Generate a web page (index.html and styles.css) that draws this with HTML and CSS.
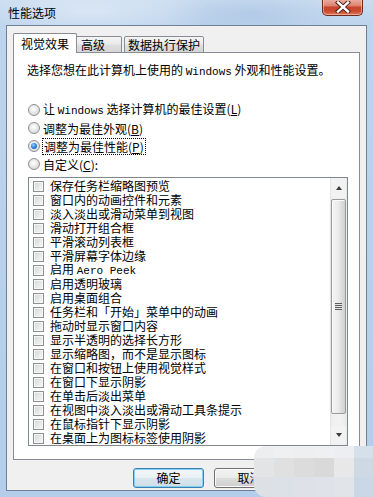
FILE: index.html
```html
<!DOCTYPE html>
<html lang="zh-CN">
<head>
<meta charset="utf-8">
<title>性能选项</title>
<link rel="stylesheet" href="styles.css">
</head>
<body>
<div class="window">
  <div class="titlebar">
    <span class="title">性能选项</span>
    <div class="close">
      <svg width="16" height="12" viewBox="0 0 16 12">
        <path d="M3 1.5 L13 10.5 M13 1.5 L3 10.5" stroke="#4a1b12" stroke-width="4.2" stroke-linecap="square"/>
        <path d="M3 1.5 L13 10.5 M13 1.5 L3 10.5" stroke="#ffffff" stroke-width="2.4" stroke-linecap="square"/>
      </svg>
    </div>
  </div>
  <div class="client">
    <div class="tabs">
      <div class="tab active">视觉效果</div>
      <div class="tab tab-adv">高级</div>
      <div class="tab tab-dep">数据执行保护</div>
    </div>
    <div class="panel">
      <p class="desc">选择您想在此计算机上使用的 <span class="mono">Windows</span> 外观和性能设置。</p>
      <div class="radios">
        <div class="radio"><span class="rb"></span><span class="label">让 <span class="mono">Windows</span> 选择计算机的最佳设置(<u>L</u>)</span></div>
        <div class="radio"><span class="rb"></span><span class="label">调整为最佳外观(<u>B</u>)</span></div>
        <div class="radio"><span class="rb checked"></span><span class="label focus">调整为最佳性能(<u>P</u>)</span></div>
        <div class="radio"><span class="rb"></span><span class="label">自定义(<u>C</u>):</span></div>
      </div>
      <div class="list">
        <div class="items">
          <div class="item"><span class="cb"></span><span class="label">保存任务栏缩略图预览</span></div>
          <div class="item"><span class="cb"></span><span class="label">窗口内的动画控件和元素</span></div>
          <div class="item"><span class="cb"></span><span class="label">淡入淡出或滑动菜单到视图</span></div>
          <div class="item"><span class="cb"></span><span class="label">滑动打开组合框</span></div>
          <div class="item"><span class="cb"></span><span class="label">平滑滚动列表框</span></div>
          <div class="item"><span class="cb"></span><span class="label">平滑屏幕字体边缘</span></div>
          <div class="item"><span class="cb"></span><span class="label">启用 <span class="mono">Aero Peek</span></span></div>
          <div class="item"><span class="cb"></span><span class="label">启用透明玻璃</span></div>
          <div class="item"><span class="cb"></span><span class="label">启用桌面组合</span></div>
          <div class="item"><span class="cb"></span><span class="label">任务栏和「开始」菜单中的动画</span></div>
          <div class="item"><span class="cb"></span><span class="label">拖动时显示窗口内容</span></div>
          <div class="item"><span class="cb"></span><span class="label">显示半透明的选择长方形</span></div>
          <div class="item"><span class="cb"></span><span class="label">显示缩略图，而不是显示图标</span></div>
          <div class="item"><span class="cb"></span><span class="label">在窗口和按钮上使用视觉样式</span></div>
          <div class="item"><span class="cb"></span><span class="label">在窗口下显示阴影</span></div>
          <div class="item"><span class="cb"></span><span class="label">在单击后淡出菜单</span></div>
          <div class="item"><span class="cb"></span><span class="label">在视图中淡入淡出或滑动工具条提示</span></div>
          <div class="item"><span class="cb"></span><span class="label">在鼠标指针下显示阴影</span></div>
          <div class="item"><span class="cb"></span><span class="label">在桌面上为图标标签使用阴影</span></div>
        </div>
        <div class="scroll">
          <div class="sb-btn up"><span class="arrow-up"></span></div>
          <div class="thumb"><span class="grip"></span></div>
          <div class="track"></div>
          <div class="sb-btn down"><span class="arrow-down"></span></div>
        </div>
      </div>
    </div>
    <div class="buttons">
      <button class="btn default">确定</button>
      <button class="btn">取消</button>
    </div>
  </div>
  <div class="mosaic">
    <span class="m1"></span><span class="m2"></span><span class="m3"></span><span class="m4"></span><span class="m5"></span><span class="m6"></span>
    <span class="m7"></span><span class="m8"></span><span class="m9"></span><span class="m10"></span><span class="m11"></span><span class="m12"></span>
    <span class="m13"></span><span class="m14"></span><span class="m15"></span><span class="m16"></span><span class="m17"></span><span class="m18"></span>
  </div>
</div>
</body>
</html>
```

FILE: styles.css
```css
* { box-sizing: border-box; }
html, body { margin: 0; padding: 0; }
body { width: 373px; height: 497px; overflow: hidden; }

.window {
  width: 373px;
  height: 497px;
  position: relative;
  overflow: hidden;
  font-family: "Noto Sans CJK SC", "Liberation Sans", sans-serif;
  font-size: 12px;
  color: #000;
  background:
    radial-gradient(ellipse 120px 30px at 90px 12px, rgba(255,255,255,0.35), rgba(255,255,255,0) 100%),
    radial-gradient(ellipse 90px 24px at 250px 14px, rgba(150,180,215,0.35), rgba(150,180,215,0) 100%),
    linear-gradient(180deg, #cadcf0 0, #bdd4ed 25px, #b3cdea 100%);
}

.mono { font-family: "Liberation Mono", monospace; font-size: 11px; }
.label { white-space: pre; }

/* title bar */
.titlebar {
  height: 25px;
  display: flex;
  justify-content: space-between;
  align-items: flex-start;
}
.title {
  padding-left: 8px;
  line-height: 25px;
  font-size: 12px;
}
.close {
  width: 41px;
  height: 17px;
  margin: -1px 10px 0 0;
  border: 1px solid #6e2a1f;
  border-top: 0;
  border-radius: 0 0 5px 5px;
  background: linear-gradient(180deg, #eab0a4 0, #de8674 40%, #c8452d 52%, #c9492f 75%, #dc7a5c 100%);
  box-shadow: inset 0 0 0 1px rgba(255,220,210,0.5);
  display: flex;
  align-items: center;
  justify-content: center;
}

/* client area */
.client {
  margin: 0 6px;
  height: 466px;
  border: 1px solid #6f8196;
  background: #f0f0f0;
  padding: 7px 6px 0 6px;
}

.tabs {
  display: flex;
  align-items: flex-end;
  height: 20px;
  margin-bottom: -1px;
  position: relative;
  z-index: 1;
}
.tab {
  border: 1px solid #898c95;
  border-radius: 2px 2px 0 0;
  white-space: nowrap;
}
.tab.active {
  width: 64px;
  height: 20px;
  border-bottom: 0;
  background: #fff;
  padding-left: 7px;
  line-height: 19px;
}
.tab-adv, .tab-dep {
  height: 17px;
  line-height: 15px;
  padding-left: 3px;
  background: linear-gradient(180deg, #f4f4f4 0, #ebebeb 45%, #dedede 55%, #d6d6d6 100%);
}
.tab-adv { width: 45px; border-left: 0; border-radius: 0 2px 0 0; padding-left: 4px; }
.tab-dep { width: 80px; margin-left: 2px; }

.panel {
  border: 1px solid #898c95;
  background: #fff;
  padding: 0 0 13px 13px;
}
.desc {
  margin: 10px 0 0 0;
  line-height: 14px;
  white-space: nowrap;
}

.radios { margin-top: 22px; }
.radio {
  display: flex;
  align-items: center;
  height: 18px;
  padding-left: 1px;
  white-space: nowrap;
}
.radio .label { line-height: 15px; }
.rb {
  width: 12px;
  height: 12px;
  flex: none;
  border-radius: 50%;
  border: 1px solid #8d8f92;
  background: radial-gradient(circle at 45% 40%, #ffffff 0, #eeeeee 35%, #d6d6d6 80%, #c9c9c9 100%);
  margin-right: 3px;
  display: flex;
  align-items: center;
  justify-content: center;
}
.rb.checked::after {
  content: "";
  width: 6px;
  height: 6px;
  border-radius: 50%;
  background: radial-gradient(circle at 40% 35%, #9fd2ff 0, #3c8ee0 40%, #15499a 100%);
}
.focus {
  outline: 1px dotted #000;
  outline-offset: 0;
  padding: 0 1px;
}

/* list */
.list {
  margin: 4px 0 0 1px;
  width: 320px;
  height: 269px;
  border: 1px solid #828790;
  background: #fff;
  display: flex;
}
.items {
  flex: 1;
  min-width: 0;
  padding: 1px 0 0 4px;
}
.item {
  display: flex;
  align-items: center;
  height: 14px;
  white-space: nowrap;
}
.item .label { line-height: 14px; }
.cb {
  width: 11px;
  height: 11px;
  flex: none;
  border: 1px solid #8e8f8f;
  background: linear-gradient(135deg, #d3d5d8 0, #e8e9ea 55%, #f6f6f6 100%);
  box-shadow: inset 0 0 0 1px #f7f7f7;
  margin-right: 6px;
}

.scroll {
  width: 17px;
  flex: none;
  display: flex;
  flex-direction: column;
  background: linear-gradient(90deg, #e2e2e2 0, #efefef 2px, #f2f2f2 60%, #e9e9e9 100%);
}
.sb-btn {
  height: 18px;
  margin: 1px 1px 0 1px;
  display: flex;
  align-items: center;
  justify-content: center;
  background: #f2f2f2;
}
.sb-btn.down { margin: 0 1px 1px 1px; }
.arrow-up {
  width: 0; height: 0;
  border-left: 3.5px solid transparent;
  border-right: 3.5px solid transparent;
  border-bottom: 4px solid #3a3a3a;
}
.arrow-down {
  width: 0; height: 0;
  border-left: 3.5px solid transparent;
  border-right: 3.5px solid transparent;
  border-top: 4px solid #3a3a3a;
}
.thumb {
  height: 215px;
  margin: 2px 1px 0 1px;
  border: 1px solid #9a9a9a;
  border-radius: 2px;
  background: linear-gradient(90deg, #f4f4f4 0, #ececec 45%, #dcdcdc 75%, #d0d0d0 100%);
  box-shadow: inset 1px 1px 0 #fbfbfb;
  display: flex;
  align-items: center;
  justify-content: center;
}
.grip {
  width: 7px;
  height: 7px;
  background: repeating-linear-gradient(180deg, #5d5d5d 0, #5d5d5d 1px, #e6e6e6 1px, #e6e6e6 2px);
}
.track { flex: 1; }

/* buttons */
.buttons {
  display: flex;
  gap: 10px;
  padding-left: 120px;
  margin-top: 8px;
}
.btn {
  width: 71px;
  height: 20px;
  padding: 0;
  border: 1px solid #707070;
  border-radius: 3px;
  font-family: "Noto Sans CJK SC", sans-serif;
  font-size: 12px;
  line-height: 18px;
  color: #000;
  background: linear-gradient(180deg, #f2f2f2 0, #ebebeb 48%, #dddddd 52%, #cfcfcf 100%);
  box-shadow: inset 0 0 0 1px #fbfbfb;
}
.btn.default {
  border-color: #3c7fb1;
  box-shadow: inset 0 0 0 1px #7fd0f3;
  background: linear-gradient(180deg, #f3f7fa 0, #eaf1f5 48%, #dae6ee 52%, #cfdde6 100%);
}

/* pixelated watermark */
.mosaic {
  position: absolute;
  left: 254px;
  top: 446px;
  width: 119px;
  height: 51px;
  display: grid;
  grid-template-columns: 20px 20px 20px 20px 20px 19px;
  grid-template-rows: 12px 19px 20px;
  border-radius: 12px 0 0 12px;
  overflow: hidden;
}
.m1 { background: #eceef0; } .m2 { background: #eff0f2; } .m3 { background: #eeeff1; }
.m4 { background: #eef0f2; } .m5 { background: #eceef1; } .m6 { background: #d6e0eb; }
.m7 { background: #e3e4e5; } .m8 { background: #e0e0e0; } .m9 { background: #dcdcdc; }
.m10 { background: #d9d9d9; } .m11 { background: #e8e8e8; } .m12 { background: #cfd9e4; }
.m13 { background: #dde1e6; } .m14 { background: #dce1e8; } .m15 { background: #dee2e8; }
.m16 { background: #dfe3e9; } .m17 { background: #e1e5ea; } .m18 { background: #c9d7e6; }
```
